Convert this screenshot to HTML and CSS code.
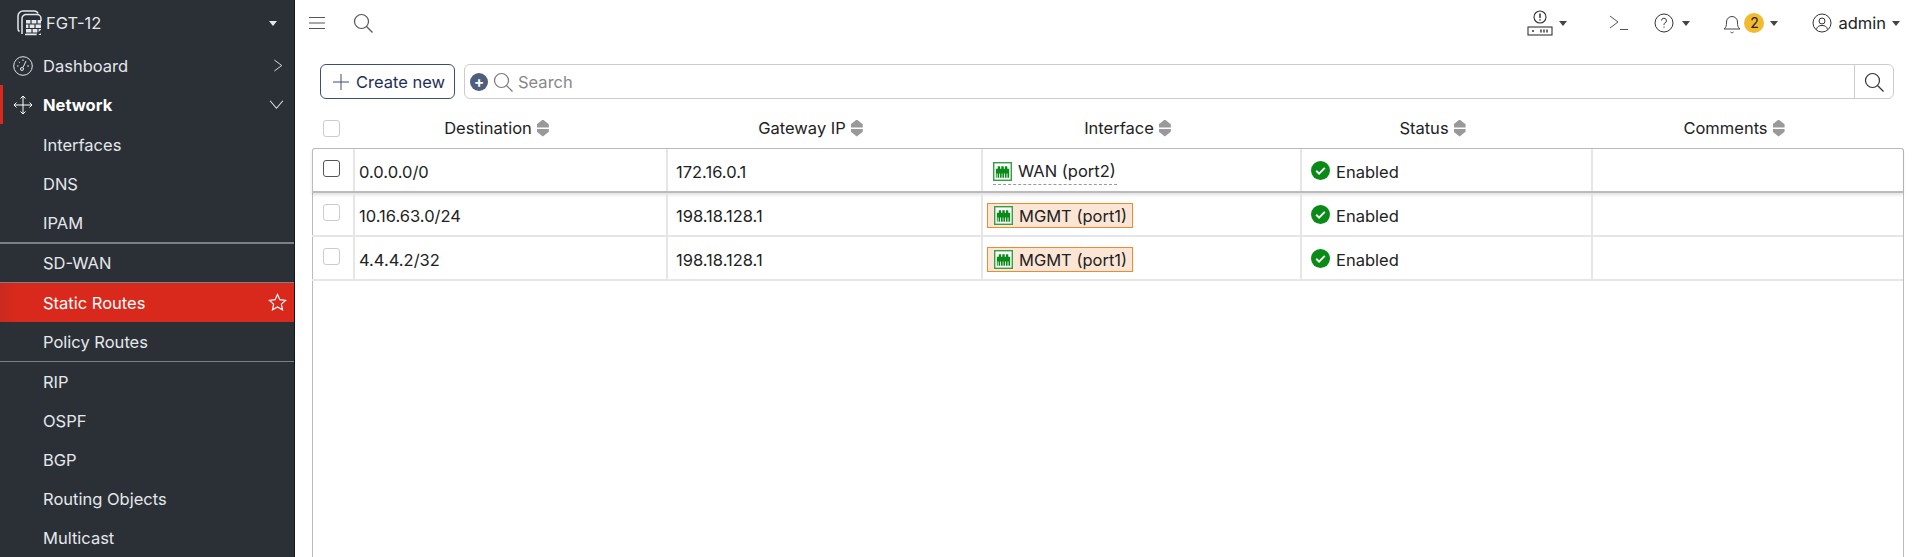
FILE: index.html
```html
<!DOCTYPE html>
<html lang="en">
<head>
    <meta charset="UTF-8">
    <title>Static Routes</title>
    <link rel="stylesheet" href="styles.css">
</head>
<body>
    <svg class="defs" width="0" height="0">
        <symbol id="port" viewBox="0 0 20 20">
            <rect x="0.75" y="0.75" width="18.500" height="18.500" fill="#fff" stroke="#35a043" stroke-width="1.500"/>
            <path d="M3 16.500V7h2V4.500h2.500V7h1.200V4.500h2.600V7h1.200V4.500H15V7h2v9.500h-1.800V12h-.9v4.500h-1.700V12h-.9v4.500h-1.800V12h-.8v4.500H7.400V12h-.9v4.500H4.800V12h-.9v4.500z" fill="#0b8a1a"/>
        </symbol>
        <symbol id="check" viewBox="0 0 20 20">
            <circle cx="10" cy="10" r="10" fill="#0a8a16"/>
            <path d="M5.500 10.300l3 3 6-6" fill="none" stroke="#fff" stroke-width="2"/>
        </symbol>
        <symbol id="lens" viewBox="0 0 20 20">
            <circle cx="8.500" cy="8.500" r="7" fill="none" stroke="currentColor" stroke-width="1.200"/>
            <path d="M13.500 13.500l6 6" fill="none" stroke="currentColor" stroke-width="1.200"/>
        </symbol>
    </svg>

    <aside class="sidebar">
        <div class="device">
            <svg class="device-icon" viewBox="0 0 26 26" width="26" height="26" fill="none" stroke="#e4e7ec" stroke-width="1.500">
                <path d="M2.500 21.500c-1-.6-1.500-1.600-1.500-3V6a5 5 0 0 1 5-5h11c2 0 3.500 1 4 2.500"/>
                <path d="M5 24V8.500a4 4 0 0 1 4-4h11a4 4 0 0 1 4 4V11"/>
                <path d="M8 24.500h12"/>
                <path d="M9 10h15v15H9z" fill="#e4e7ec" stroke="none"/>
                <path d="M9 14h15M9 18.500h15M9 23h15M14 10v4M20 10v4M12 14v4.500M18 14v4.500M15 18.500V23M21 18.500V23" stroke="#2b3036" stroke-width="1.200"/>
                <path d="M20 25l5-5" stroke="#2b3036" stroke-width="2"/>
            </svg>
            <span class="device-name">FGT-12</span>
            <i class="caret caret-light"></i>
        </div>
        <nav>
            <a class="nav-item nav-top">
                <svg class="nav-icon" viewBox="0 0 20 20" width="20" height="20" fill="none" stroke="#e4e7ec" stroke-width="1">
                    <circle cx="10" cy="10" r="9.300"/>
                    <circle cx="9" cy="13" r="1.500"/>
                    <path d="M10 11.500L13 5M4 10h1.500M5.800 5.800l1 1M10 3.500V5M14.200 10H16"/>
                </svg>
                <span>Dashboard</span>
                <svg class="chev" viewBox="0 0 12 14" width="11" height="15" fill="none" stroke="#e4e7ec"><path d="M1.500 1l8 6-8 6"/></svg>
            </a>
            <a class="nav-item nav-top nav-open">
                <svg class="nav-icon" viewBox="0 0 20 20" width="20" height="20" fill="none" stroke="#fff" stroke-width="1">
                    <path d="M10 1v18M1 10h18M7.500 3.500L10 1l2.500 2.500M7.500 16.500L10 19l2.500-2.500M3.500 7.500L1 10l2.500 2.500M16.500 7.500L19 10l-2.500 2.500"/>
                </svg>
                <span>Network</span>
                <svg class="chev" viewBox="0 0 14 10" width="15" height="11" fill="none" stroke="#e4e7ec"><path d="M1 1.500l6 7 6-7"/></svg>
            </a>
            <a class="nav-item">Interfaces</a>
            <a class="nav-item">DNS</a>
            <a class="nav-item">IPAM</a>
            <div class="nav-rule"></div>
            <a class="nav-item">SD-WAN</a>
            <a class="nav-item nav-active">
                <span>Static Routes</span>
                <svg class="star" viewBox="0 0 20 20" width="19" height="19" fill="none" stroke="#fff" stroke-width="1.200"><path d="M10 1.500l2.500 5.500 6 .7-4.400 4 1.200 6-5.300-3-5.300 3 1.200-6-4.400-4 6-.7z"/></svg>
            </a>
            <a class="nav-item">Policy Routes</a>
            <div class="nav-rule nav-rule-thin"></div>
            <a class="nav-item">RIP</a>
            <a class="nav-item">OSPF</a>
            <a class="nav-item">BGP</a>
            <a class="nav-item">Routing Objects</a>
            <a class="nav-item">Multicast</a>
        </nav>
    </aside>

    <main class="main">
        <header class="topbar">
            <svg class="burger" viewBox="0 0 16 12" width="16" height="12" fill="none" stroke="#555"><path d="M0 .5h16M0 6h16M0 11.500h16"/></svg>
            <svg class="top-search" width="20" height="20"><use href="#lens"/></svg>
            <div class="top-right">
                <div class="top-item top-alert">
                    <svg viewBox="0 0 26 26" width="26" height="26" fill="none" stroke="#333" stroke-width="1.100">
                        <circle cx="13" cy="7" r="6"/>
                        <path d="M13 3.500v4.500M13 9.300v1.200" stroke-width="1.500"/>
                        <rect x="1" y="17" width="24" height="8"/>
                        <path d="M5 21h2M14 19.500v3M17 19.500v3M20 19.500v3" stroke-width="1.400"/>
                    </svg>
                    <i class="caret"></i>
                </div>
                <svg class="top-term" viewBox="0 0 20 16" width="20" height="16" fill="none" stroke="#555"><path d="M1 1l8 6-8 6M11 14.500h8"/></svg>
                <div class="top-item top-help">
                    <svg viewBox="0 0 20 20" width="20" height="20" fill="none" stroke="#333">
                        <circle cx="10" cy="10" r="9"/>
                        <path d="M7.500 7.500a2.500 2.500 0 1 1 3.500 2.500c-.8.400-1 .8-1 2M10 13.500v1.200"/>
                    </svg>
                    <i class="caret"></i>
                </div>
                <div class="top-item top-bell">
                    <svg viewBox="0 0 18 22" width="18" height="22" fill="none" stroke="#444">
                        <path d="M1 17c2-1.500 2.500-3 2.500-7a5.500 5.500 0 0 1 11 0c0 4 .5 5.500 2.500 7zM7.500 20c1 1 2 1 3 0"/>
                    </svg>
                    <span class="badge">2</span>
                    <i class="caret"></i>
                </div>
                <div class="top-item top-user">
                    <svg viewBox="0 0 20 20" width="20" height="20" fill="none" stroke="#333">
                        <circle cx="10" cy="10" r="9"/>
                        <circle cx="10" cy="8" r="3"/>
                        <path d="M4.500 16.500c.5-3 2.500-4 5.500-4s5 1 5.500 4"/>
                    </svg>
                    <span>admin</span>
                    <i class="caret"></i>
                </div>
            </div>
        </header>

        <div class="toolbar">
            <button class="btn-new">
                <svg viewBox="0 0 16 16" width="16" height="16" fill="none" stroke="#3a4f75"><path d="M8 0v16M0 8h16"/></svg>
                Create new
            </button>
            <div class="search-box">
                <span class="add-filter">+</span>
                <svg class="search-lens" width="20" height="20"><use href="#lens"/></svg>
                <span class="search-hint">Search</span>
                <span class="search-go"><svg width="20" height="20"><use href="#lens"/></svg></span>
            </div>
        </div>

        <div class="head-row grid-cols">
            <div class="head-check"><i class="box"></i></div>
            <div class="head-cell">Destination <i class="sort"></i></div>
            <div class="head-cell">Gateway IP <i class="sort"></i></div>
            <div class="head-cell">Interface <i class="sort"></i></div>
            <div class="head-cell">Status <i class="sort"></i></div>
            <div class="head-cell">Comments <i class="sort"></i></div>
        </div>

        <div class="table">
            <div class="row row-first grid-cols">
                <div class="cell cell-check"><i class="box box-dark"></i></div>
                <div class="cell">0.0.0.0/0</div>
                <div class="cell cell-ip">172.16.0.1</div>
                <div class="cell"><span class="port port-wan"><svg width="19" height="19"><use href="#port"/></svg>WAN (port2)</span></div>
                <div class="cell cell-status"><svg width="19" height="19"><use href="#check"/></svg>Enabled</div>
                <div class="cell"></div>
            </div>
            <div class="row grid-cols">
                <div class="cell cell-check"><i class="box"></i></div>
                <div class="cell">10.16.63.0/24</div>
                <div class="cell cell-ip">198.18.128.1</div>
                <div class="cell"><span class="port port-mgmt"><svg width="19" height="19"><use href="#port"/></svg>MGMT (port1)</span></div>
                <div class="cell cell-status"><svg width="19" height="19"><use href="#check"/></svg>Enabled</div>
                <div class="cell"></div>
            </div>
            <div class="row grid-cols">
                <div class="cell cell-check"><i class="box"></i></div>
                <div class="cell">4.4.4.2/32</div>
                <div class="cell cell-ip">198.18.128.1</div>
                <div class="cell"><span class="port port-mgmt"><svg width="19" height="19"><use href="#port"/></svg>MGMT (port1)</span></div>
                <div class="cell cell-status"><svg width="19" height="19"><use href="#check"/></svg>Enabled</div>
                <div class="cell"></div>
            </div>
        </div>
    </main>
</body>
</html>
```

FILE: styles.css
```css
* {
    margin: 0;
    padding: 0;
    box-sizing: border-box;
}

html, body {
    height: 557px;
    overflow: hidden;
}

body {
    display: flex;
    font-family: Inter, "Liberation Sans", sans-serif;
    font-size: 16.5px;
    color: #222;
    background-color: #fff;
}

.defs {
    position: absolute;
}

/* Sidebar */
.sidebar {
    width: 295px;
    flex-shrink: 0;
    background-color: #2b3036;
    border-right: 1px solid #14171a;
    color: #e4e7ec;
}

.device {
    display: flex;
    align-items: center;
    height: 46px;
    padding: 0 16px 0 17px;
}

.device-name {
    margin-left: 3px;
    flex: 1;
}

.caret {
    display: inline-block;
    width: 0;
    height: 0;
    border-left: 4.500px solid transparent;
    border-right: 4.500px solid transparent;
    border-top: 5px solid #444;
}

.caret-light {
    border-top-color: #e4e7ec;
    margin-right: 1px;
}

.nav-item {
    display: flex;
    align-items: center;
    height: 39px;
    padding-left: 43px;
}

.nav-top {
    padding-left: 13px;
    padding-right: 10px;
}

.nav-top span {
    flex: 1;
    margin-left: 10px;
}

.nav-open {
    margin-bottom: 1px;
    color: #fff;
    font-weight: 700;
    box-shadow: inset 3px 0 0 #d9291c;
}

.nav-active {
    height: 40px;
    border-top: 1px solid #7c8085;
    background: linear-gradient(90deg, #c92a20, #d9291c 16px);
    color: #fff;
    padding-right: 7px;
}

.nav-active span {
    flex: 1;
}

.nav-rule {
    height: 2px;
    margin-bottom: -1px;
    background-color: #7c8085;
}

.nav-rule-thin {
    height: 1px;
    margin-bottom: 0;
}

/* Main */
.main {
    flex: 1;
    min-width: 0;
    padding-right: 16px;
}

.topbar {
    display: flex;
    align-items: center;
    height: 46px;
    padding-left: 14px;
    padding-right: 4px;
}

.burger {
    margin-right: 28px;
}

.top-search {
    color: #555;
}

.top-right {
    display: flex;
    align-items: center;
    margin-left: auto;
}

.top-item {
    display: flex;
    align-items: center;
    gap: 8px;
}

.top-alert {
    gap: 6px;
}

.top-term {
    margin-left: 42px;
    margin-right: 25px;
}

.top-bell {
    margin-left: 33px;
    gap: 0;
}

.top-user {
    margin-left: 34px;
    gap: 6px;
}

.badge {
    width: 20px;
    height: 20px;
    margin: 0 6px 0 3px;
    border-radius: 50%;
    background-color: #f2bb2e;
    text-align: center;
    font-size: 14px;
    line-height: 20px;
}

.toolbar {
    display: flex;
    gap: 9px;
    height: 35px;
    margin-top: 18px;
    padding-left: 25px;
    padding-right: 10px;
}

.btn-new {
    display: flex;
    align-items: center;
    gap: 7px;
    width: 135px;
    padding-left: 12px;
    border: 1px solid #3a4f75;
    border-radius: 6px;
    background-color: #fff;
    color: #1e2f55;
    font-family: inherit;
    font-size: 16.5px;
}

.search-box {
    flex: 1;
    display: flex;
    align-items: center;
    border: 1px solid #ccc;
    border-radius: 6px;
    padding-left: 5px;
}

.add-filter {
    width: 18px;
    height: 18px;
    border-radius: 50%;
    background-color: #4f5e7d;
    color: #fff;
    text-align: center;
    font-weight: 700;
    font-size: 15px;
    line-height: 18px;
}

.search-lens {
    margin-left: 5px;
    color: #777;
}

.search-hint {
    flex: 1;
    margin-left: 5px;
    color: #888;
}

.search-go {
    display: flex;
    align-items: center;
    justify-content: center;
    width: 39px;
    height: 100%;
    border-left: 1px solid #ccc;
    color: #333;
}

/* Table */
.grid-cols {
    display: grid;
    grid-template-columns: 42px 313px 315px 319px 291px 1fr;
}

.head-row {
    height: 49px;
    padding-top: 9px;
    padding-left: 17px;
    align-items: center;
}

.head-check {
    padding-left: 11px;
    display: flex;
}

.head-cell {
    display: flex;
    align-items: center;
    justify-content: center;
    gap: 5px;
    padding-right: 28px;
}

.box {
    display: block;
    width: 17px;
    height: 17px;
    border: 1px solid #ccc;
    border-radius: 3px;
    background-color: #fff;
}

.box-dark {
    border-color: #555;
    border-width: 1.500px;
}

.sort {
    position: relative;
    display: inline-block;
    width: 12px;
    height: 17px;
}

.sort::before,
.sort::after {
    content: "";
    position: absolute;
    left: 0;
    width: 12px;
    height: 8px;
    background-color: #999;
}

.sort::before {
    top: 0;
    clip-path: polygon(50% 0, 100% 60%, 100% 100%, 0 100%, 0 60%);
}

.sort::after {
    bottom: 0;
    clip-path: polygon(0 0, 100% 0, 100% 40%, 50% 100%, 0 40%);
}

.table {
    height: 420px;
    margin-left: 17px;
    border: 1px solid #bbb;
    border-bottom: none;
    border-radius: 3px 3px 0 0;
}

.row {
    height: 44px;
    border-bottom: 2px solid #e6e6e6;
    margin-left: -1px;
    padding-left: 1px;
}

.row-first {
    border-bottom: 2px solid #bbb;
    box-shadow: 0 2px 3px rgba(0, 0, 0, 0.12);
}

.cell {
    display: flex;
    align-items: center;
    padding-top: 3px;
    padding-left: 4px;
    border-right: 2px solid #e6e6e6;
}

.cell:last-child {
    border-right: none;
}

.cell-check {
    padding-left: 10px;
}

.cell-check .box {
    margin-top: -6px;
}

.cell-ip {
    padding-left: 8px;
}

.cell-status {
    gap: 6px;
    padding-left: 9px;
}

.cell-status svg {
    margin-top: -2px;
}

.port {
    display: flex;
    align-items: center;
    gap: 6px;
    height: 25px;
    padding: 0 5px 0 6px;
}

.port-wan {
    border-bottom: 1px dashed #999;
    margin-left: 6px;
    padding: 0 1px 0 0;
    height: 26px;
}

.port-mgmt {
    border: 1px solid #f08a32;
    background-color: #fbe6d6;
}
```
